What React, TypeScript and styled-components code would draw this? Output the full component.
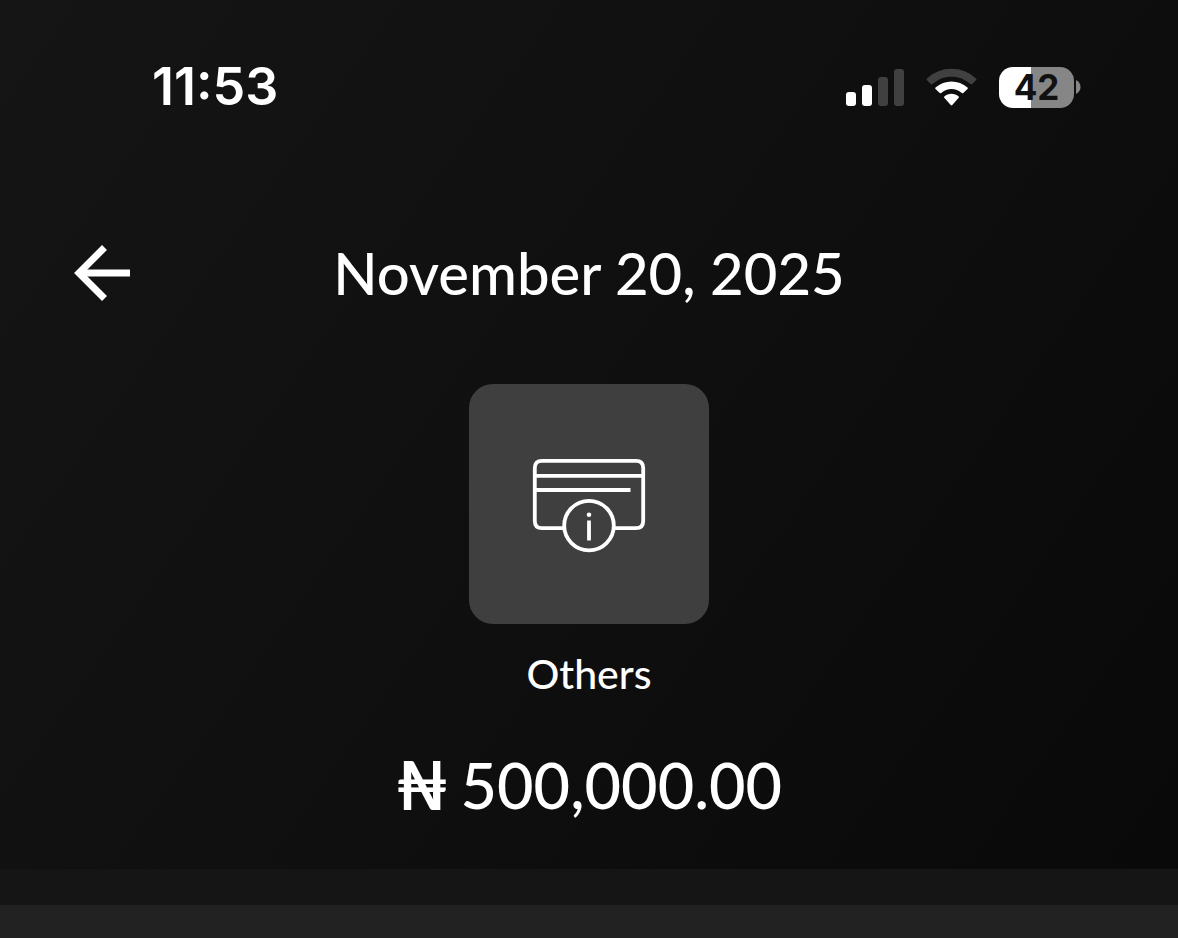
import React from "react";
import styled, { createGlobalStyle } from "styled-components";

const GlobalStyle = createGlobalStyle`
  *, *::before, *::after { box-sizing: border-box; }
  body { margin: 0; background: #222222; }
`;

const Screen = styled.main`
  min-height: 100vh;
  display: flex;
  flex-direction: column;
  color: #ffffff;
  font-family: Lato, "Noto Sans", sans-serif;
  font-weight: 500;
`;

const Hero = styled.section`
  padding-bottom: 48px;
  background: linear-gradient(125deg, #151515 0%, #101010 45%, #090909 100%);
`;

const StatusBar = styled.div`
  display: flex;
  align-items: center;
  justify-content: space-between;
  padding: 55px 97px 0 152px;
  font-family: Inter, sans-serif;
`;

const Time = styled.time`
  font-size: 52px;
  line-height: 64px;
  font-weight: 600;
`;

const StatusIcons = styled.div`
  display: flex;
  align-items: center;
  gap: 22px;

  svg { display: block; }
`;

const Battery = styled.div`
  display: flex;
  align-items: center;
  gap: 2px;
`;

const BatteryLevel = styled.span<{ $level: number }>`
  width: 75px;
  height: 41px;
  border-radius: 14px;
  background: linear-gradient(
    to right,
    #ffffff ${(p) => p.$level}%,
    #868686 ${(p) => p.$level}%
  );
  color: #111111;
  font-size: 35px;
  line-height: 41px;
  font-weight: 700;
  text-align: center;
`;

const Header = styled.header`
  display: grid;
  grid-template-columns: 1fr auto 1fr;
  align-items: center;
  padding: 114px 72px 0;
`;

const BackButton = styled.button`
  justify-self: start;
  padding: 0;
  border: 0;
  background: none;
  color: inherit;
  cursor: pointer;

  svg { display: block; }
`;

const Title = styled.h1`
  margin: 0;
  font-size: 58px;
  line-height: 80px;
  font-weight: 500;
`;

const Summary = styled.div`
  display: flex;
  flex-direction: column;
  align-items: center;
  padding-top: 71px;
`;

const CategoryTile = styled.div`
  display: flex;
  align-items: center;
  justify-content: center;
  width: 240px;
  height: 240px;
  border-radius: 24px;
  background: #3f3f3f;
`;

const Category = styled.p`
  margin: 24px 0 0;
  font-size: 41px;
  line-height: 52px;
`;

const Amount = styled.p`
  display: flex;
  align-items: center;
  gap: 12px;
  margin: 48px 0 0;
  font-size: 63px;
  line-height: 73px;
`;

const Currency = styled.span`
  font-size: 66px;
  font-weight: 700;
`;

const Band = styled.div`
  height: 36px;
  background: #151515;
`;

const Sheet = styled.section`
  flex: 1;
  min-height: 32px;
  background: #222222;
`;

const SignalIcon = () => (
  <svg width="58" height="38" viewBox="0 0 58 38" aria-hidden="true">
    <rect x="0" y="24" width="10" height="14" rx="3" fill="#fff" />
    <rect x="16" y="17" width="10" height="21" rx="3" fill="#fff" />
    <rect x="32" y="9" width="10" height="29" rx="3" fill="#404040" />
    <rect x="48" y="1" width="10" height="37" rx="3" fill="#404040" />
  </svg>
);

const WifiIcon = () => (
  <svg width="51" height="38" viewBox="0 0 51 38" aria-hidden="true">
    <path
      d="M.8 10.7C14.2-2.6 36.8-2.6 50.2 10.7Q50.8 11.4 50.2 12.1L46 16.2Q45.2 16.8 44.5 16.1C34 6.2 17 6.2 6.5 16.1Q5.8 16.8 5 16.2L.8 12.1Q.2 11.4.8 10.7Z"
      fill="#404040"
    />
    <path
      d="M9.5 19.4C18.4 11.4 32.6 11.4 41.5 19.4Q42.2 20.1 41.5 20.9L37.3 25Q36.6 25.6 35.8 25C29.8 19.8 21.2 19.8 15.2 25Q14.4 25.6 13.7 25L9.5 20.9Q8.8 20.1 9.5 19.4Z"
      fill="#fff"
    />
    <path
      d="M18.3 28.4C22.4 24.9 28.6 24.9 32.7 28.4Q33.4 29.1 32.7 29.8L26.3 37Q25.5 37.8 24.7 37L18.3 29.8Q17.6 29.1 18.3 28.4Z"
      fill="#fff"
    />
  </svg>
);

const BatteryCap = () => (
  <svg width="5" height="14" viewBox="0 0 5 14" aria-hidden="true">
    <path d="M0 0C6 2.5 6 11.5 0 14Z" fill="#868686" />
  </svg>
);

const ArrowLeftIcon = () => (
  <svg width="60" height="60" viewBox="0 0 60 60" fill="none" stroke="currentColor" strokeWidth="7" aria-hidden="true">
    <path d="M32.5 4.5L7 30L32.5 55.5" />
    <path d="M7 30H58" />
  </svg>
);

const CardInfoIcon = () => (
  <svg width="114" height="98" viewBox="0 -3 114 98" fill="none" stroke="#fff" strokeWidth="3.8" aria-hidden="true">
    <path d="M31 70.2H10Q2.8 70.2 2.8 63V10Q2.8 2.8 10 2.8H104Q111.2 2.8 111.2 10V63Q111.2 70.2 104 70.2H83" />
    <path d="M3 17.8H111M3 32H98.5" />
    <circle cx="57" cy="67.6" r="24.8" />
    <path d="M57 62.5V82.5" />
    <circle cx="57" cy="56.8" r="2.3" fill="#fff" stroke="none" />
  </svg>
);

export default function App() {
  return (
    <Screen>
      <GlobalStyle />
      <Hero>
        <StatusBar>
          <Time>11:53</Time>
          <StatusIcons>
            <SignalIcon />
            <WifiIcon />
            <Battery>
              <BatteryLevel $level={43}>42</BatteryLevel>
              <BatteryCap />
            </Battery>
          </StatusIcons>
        </StatusBar>
        <Header>
          <BackButton type="button" aria-label="Back">
            <ArrowLeftIcon />
          </BackButton>
          <Title>November 20, 2025</Title>
        </Header>
        <Summary>
          <CategoryTile>
            <CardInfoIcon />
          </CategoryTile>
          <Category>Others</Category>
          <Amount>
            <Currency>₦</Currency>
            <span>500,000.00</span>
          </Amount>
        </Summary>
      </Hero>
      <Band />
      <Sheet />
    </Screen>
  );
}
